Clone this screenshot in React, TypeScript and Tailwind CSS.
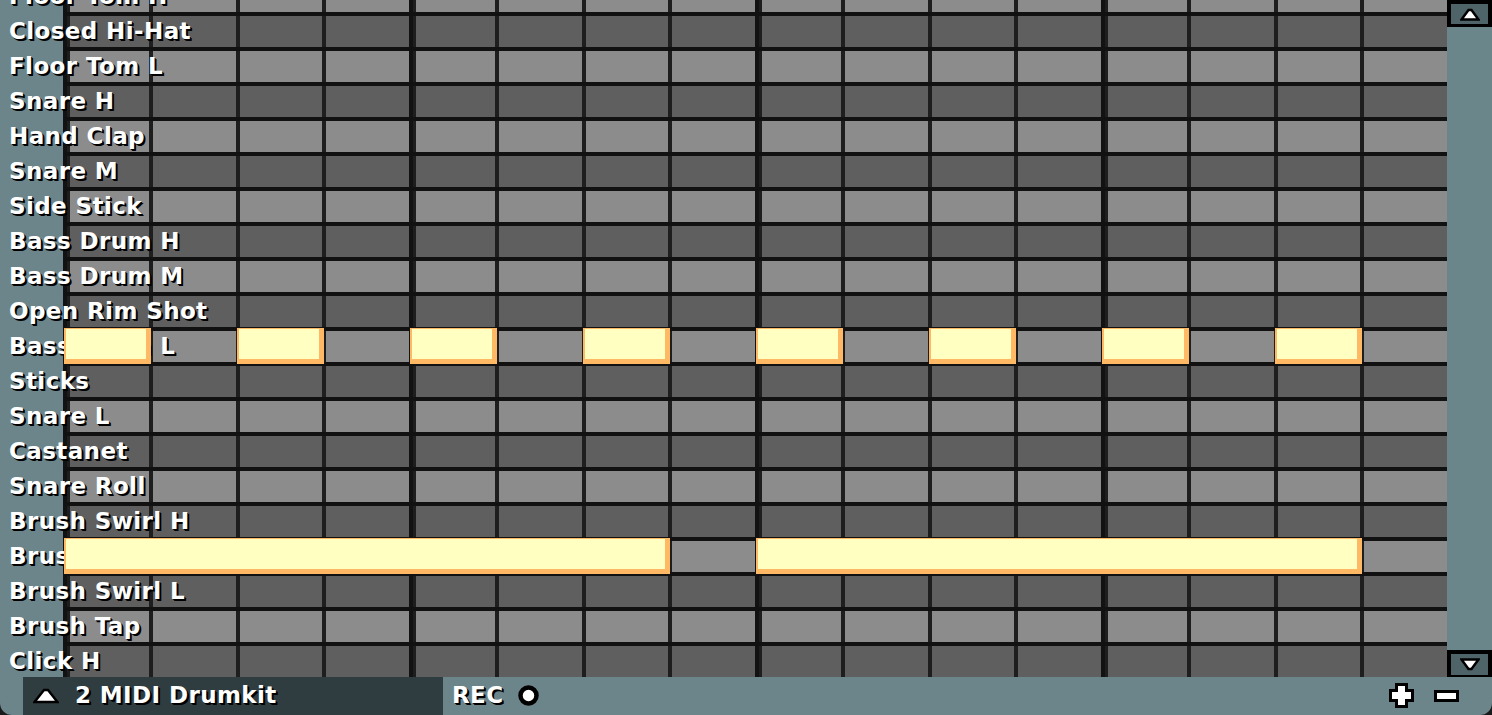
import React from "react";

const ROWS = [
  "Floor Tom H",
  "Closed Hi-Hat",
  "Floor Tom L",
  "Snare H",
  "Hand Clap",
  "Snare M",
  "Side Stick",
  "Bass Drum H",
  "Bass Drum M",
  "Open Rim Shot",
  "Bass Drum L",
  "Sticks",
  "Snare L",
  "Castanet",
  "Snare Roll",
  "Brush Swirl H",
  "Brush Swirl M",
  "Brush Swirl L",
  "Brush Tap",
  "Click H",
];

// notes per row index: [start step, length in steps]
const NOTES: Record<number, [number, number][]> = {
  10: [[0, 1], [2, 1], [4, 1], [6, 1], [8, 1], [10, 1], [12, 1], [14, 1]],
  16: [[0, 7], [8, 7]],
};

const STEP = 86.5;
const CELL_W = ["w-[79px]", "w-[83px]", "w-[82px]", "w-[83px]"];

function CellRow({ light }: { light: boolean }) {
  const cell = light ? "bg-[#8c8c8c]" : "bg-[#5f5f5f]";
  return (
    <div className="flex h-[31px] bg-[#1e1e1e]">
      {[0, 1, 2, 3].map((beat) => (
        <React.Fragment key={beat}>
          <div className="w-[4px] shrink-0 bg-[#121212]" />
          <div className="w-[3px] shrink-0 bg-[#1e1e1e]" />
          {CELL_W.map((w, i) => (
            <React.Fragment key={i}>
              {i > 0 && <div className="w-[4px] shrink-0" />}
              <div className={`${w} shrink-0 ${cell}`} />
            </React.Fragment>
          ))}
        </React.Fragment>
      ))}
    </div>
  );
}

function Note({ start, len }: { start: number; len: number }) {
  const left = 64 + start * STEP;
  const width = len * STEP + 0.5;
  return (
    <div
      className="absolute top-[-3px] h-[36px] bg-[#ffb964] pl-[2px] pt-[1px] pr-[5px] pb-[5px]"
      style={{ left: Math.round(left), width: Math.round(width) }}
    >
      <div className="w-full h-full bg-[#ffffc2]" />
    </div>
  );
}

function Row({ name, index }: { name: string; index: number }) {
  const notes = NOTES[index] || [];
  return (
    <div className="relative flex h-[35px]">
      <div className="w-[63px] shrink-0" />
      <div className="flex flex-col w-[1384px] shrink-0">
        <CellRow light={index % 2 === 0} />
        <div className="h-[4px] bg-[#111111]" />
      </div>
      <span className="absolute left-[9px] top-[4px] leading-[23px] whitespace-nowrap">{name}</span>
      {notes.map(([s, l], i) => (
        <Note key={i} start={s} len={l} />
      ))}
    </div>
  );
}

function ArrowBtn({ down }: { down?: boolean }) {
  return (
    <div
      className={
        down
          ? "h-[27px] border-x-4 border-t-4 border-b-[2px] border-black bg-[#4e6468] flex items-center justify-center"
          : "h-[27px] border-x-4 border-t-4 border-b-[3px] border-black bg-[#4e6468] flex items-center justify-center"
      }
    >
      <svg width="20" height="13" viewBox="0 0 20 13" className={down ? "rotate-180" : ""}>
        <polygon points="1.5,11.5 8.5,2 11.5,2 18.5,11.5" fill="#fff" stroke="#000" strokeWidth="2.5" strokeLinejoin="miter" />
      </svg>
    </div>
  );
}

export default function App() {
  return (
    <div className="w-[1492px] h-[715px] bg-[#1a1a1a]">
      <div className="w-full h-full bg-[#6b858a] rounded-b-[12px] overflow-hidden flex flex-col font-['DejaVu_Sans',sans-serif] font-bold text-[23px] tracking-[0.4px] text-white [text-shadow:1px_1px_0_#000,2px_2px_0_#000]">
        <div className="flex h-[677px] shrink-0">
          <div className="w-[1447px] h-full overflow-hidden">
            <div className="-mt-[19px] flex flex-col">
              {ROWS.map((r, i) => (
                <Row key={i} name={r} index={i} />
              ))}
            </div>
          </div>
          {/* scrollbar */}
          <div className="w-[45px] flex flex-col bg-[#6b868b]">
            <ArrowBtn />
            <div className="flex-1" />
            <ArrowBtn down />
          </div>
        </div>

        {/* bottom bar */}
        <div className="flex h-[38px]">
          <div className="w-[23px] shrink-0" />
          <div className="w-[420px] shrink-0 bg-[#2f3d41] flex items-start">
            <svg width="26" height="17" viewBox="0 0 26 17" className="ml-[10px] mt-[10px]">
              <polygon points="1.5,15 11,3 15,3 24.5,15" fill="#fff" stroke="#000" strokeWidth="2.5" />
            </svg>
            <span className="ml-[16px] pt-[7px] leading-[23px]">2 MIDI Drumkit</span>
          </div>
          <span className="ml-[9px] pt-[7px] leading-[23px]">REC</span>
          <svg width="21" height="21" viewBox="0 0 21 21" className="ml-[14px] mt-[8px]">
            <circle cx="10.5" cy="10.5" r="8" fill="#fff" stroke="#000" strokeWidth="4.5" />
          </svg>
          <div className="flex-1" />
          <svg width="25" height="25" viewBox="0 0 25 25" className="mt-[6px]">
            <rect x="6" y="0" width="13" height="25" fill="#000" />
            <rect x="0" y="6" width="25" height="13" fill="#000" />
            <rect x="9" y="3" width="7" height="19" fill="#fff" />
            <rect x="3" y="9" width="19" height="7" fill="#fff" />
          </svg>
          <svg width="25" height="12" viewBox="0 0 25 12" className="ml-[20px] mt-[13px] mr-[33px]">
            <rect x="0" y="0" width="25" height="12" fill="#000" />
            <rect x="3" y="3" width="19" height="6" fill="#fff" />
          </svg>
        </div>
      </div>
    </div>
  );
}
